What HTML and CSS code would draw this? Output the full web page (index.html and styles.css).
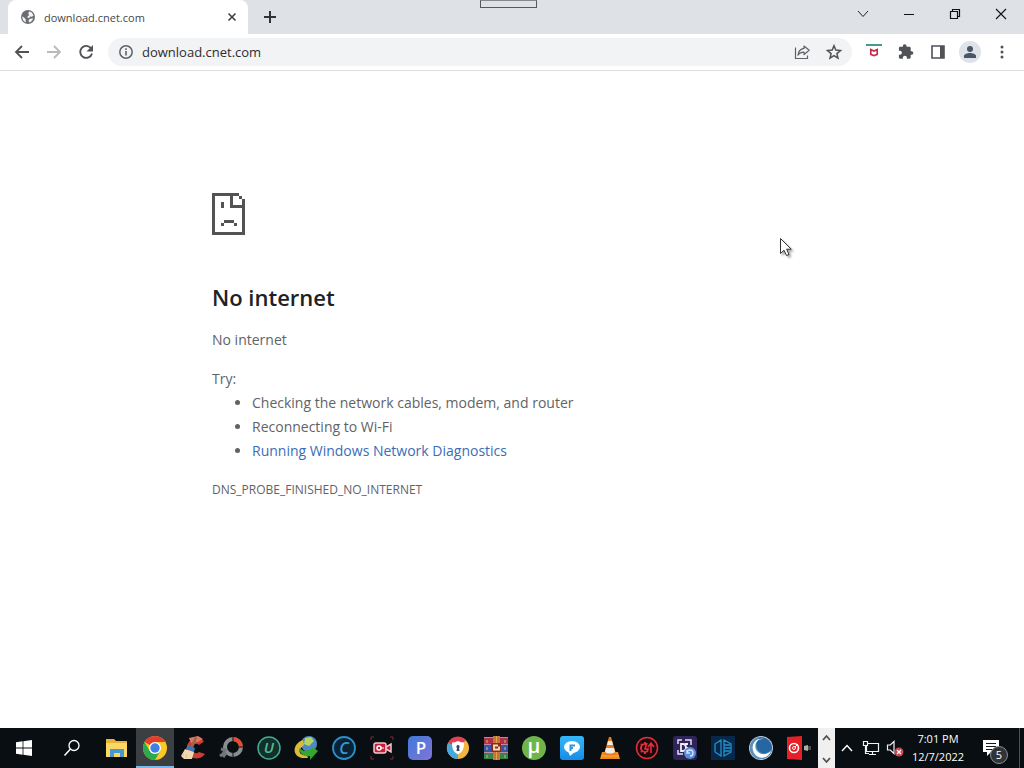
FILE: index.html
```html
<!DOCTYPE html>
<html lang="en">
<head>
    <meta charset="UTF-8">
    <meta name="viewport" content="width=device-width, initial-scale=1.0">
    <title>download.cnet.com</title>
    <link rel="stylesheet" href="styles.css">
</head>
<body>
    <header class="titlebar">
        <div class="tab">
            <svg class="favicon" width="16" height="16" viewBox="0 0 16 16"><circle cx="8" cy="8" r="7" fill="#6b6e73"/><path d="M2.400 7.200l3.200 2.900.2 3.200C3.500 12.500 1.900 10 2.400 7.200zM9 2.400l2.500.8 2 3-1.500 1.600-2-.3-.5 1.200-2 .2.300-2 1.500-.7-1-1.500z" fill="#f4f5f6"/><path d="M9.500 10l3.500-.8c-.4 2-1.600 3.500-3.500 4.200l-1-1.400z" fill="#f4f5f6"/></svg>
            <span class="tab-title">download.cnet.com</span>
            <button class="tab-close" aria-label="Close tab"><svg width="10" height="10" viewBox="0 0 10 10"><path d="M1.500 1.500l7 7M8.500 1.500l-7 7" stroke="#3c4043" stroke-width="1.600"/></svg></button>
        </div>
        <button class="new-tab" aria-label="New tab"><svg width="14" height="14" viewBox="0 0 14 14"><path d="M7 1v12M1 7h12" stroke="#303236" stroke-width="2"/></svg></button>
        <div class="window-buttons">
            <button aria-label="Search tabs"><svg width="12" height="12" viewBox="0 0 12 12"><path d="M1 3l5 5.500L11 3" fill="none" stroke="#222"/></svg></button>
            <button aria-label="Minimize"><svg width="12" height="12" viewBox="0 0 12 12"><path d="M1 6.500h10" stroke="#111"/></svg></button>
            <button aria-label="Restore"><svg width="12" height="12" viewBox="0 0 12 12"><path d="M1.500 3.500h7v7h-7zM3.500 3.500v-2h7v7h-2" fill="none" stroke="#111" stroke-width="1.200"/></svg></button>
            <button aria-label="Close"><svg width="12" height="12" viewBox="0 0 12 12"><path d="M1 1l10 10M11 1L1 11" stroke="#111" stroke-width="1.100"/></svg></button>
        </div>
        <div class="handle"></div>
    </header>

    <nav class="toolbar">
        <button class="tool" aria-label="Back"><svg width="16" height="16" viewBox="0 0 16 16"><path d="M15 8H2M8 2L2 8l6 6" fill="none" stroke="#505256" stroke-width="1.800"/></svg></button>
        <button class="tool" aria-label="Forward"><svg width="16" height="16" viewBox="0 0 16 16"><path d="M1 8h13M8 2l6 6-6 6" fill="none" stroke="#b9babc" stroke-width="1.800"/></svg></button>
        <button class="tool" aria-label="Reload"><svg width="16" height="16" viewBox="0 0 16 16"><path d="M13.200 4.500A6 6 0 1 0 14 9.500" fill="none" stroke="#505256" stroke-width="1.900"/><path d="M15 1v6.500H8.500z" fill="#505256"/></svg></button>
        <div class="address">
            <svg width="16" height="16" viewBox="0 0 16 16"><circle cx="8" cy="8" r="6.200" fill="none" stroke="#5f6368" stroke-width="1.500"/><path d="M7.200 7h1.600v4.500H7.200zM7.200 4.300h1.600v1.600H7.200z" fill="#5f6368"/></svg>
            <input class="address-input" type="text" aria-label="Address" value="download.cnet.com">
            <button class="tool" aria-label="Share"><svg width="16" height="16" viewBox="0 0 16 16"><path d="M1.500 3.500v11h12v-3" fill="none" stroke="#5f6368" stroke-width="1.200"/><path d="M10 2l5.200 4.300L10 10.500V8.200c-2.800 0-4.600.8-6 3C4.400 7.500 6.400 4.900 10 4.400z" fill="none" stroke="#5f6368" stroke-width="1.200" stroke-linejoin="round"/></svg></button>
            <button class="tool" aria-label="Bookmark"><svg width="16" height="16" viewBox="0 0 16 16"><path d="M8 1.800l1.800 4.300 4.700.4-3.600 3.100 1.100 4.600-4-2.500-4 2.500 1.100-4.600-3.600-3.100 4.700-.4z" fill="none" stroke="#505256" stroke-width="1.500"/></svg></button>
        </div>
        <button class="tool" aria-label="WebAdvisor"><svg width="16" height="16" viewBox="0 0 16 16"><path d="M0 0h16v2H0z" fill="#4a9b85"/><path d="M4.800 5.500v5L8 11.600l3.200-1.100v-5L8 7z" fill="none" stroke="#c32b46" stroke-width="1.700"/></svg></button>
        <button class="tool" aria-label="Extensions"><svg width="16" height="16" viewBox="0 0 16 16"><path d="M13.600 7.300h-.9V4.100c0-.8-.6-1.400-1.400-1.400H8.600v-.5a1.900 1.900 0 0 0-3.800 0v.5H2.300c-.8 0-1.400.6-1.400 1.400v2.600h1a2 2 0 0 1 0 4h-1v2.600c0 .8.600 1.400 1.400 1.400h2.600v-1a2 2 0 0 1 4 0v1h2.400c.8 0 1.400-.6 1.400-1.400v-2.500h.9a1.700 1.700 0 0 0 0-3.500z" fill="#505256"/></svg></button>
        <button class="tool" aria-label="Side panel"><svg width="16" height="16" viewBox="0 0 16 16"><path d="M2 2h12v12H2z" fill="none" stroke="#505256" stroke-width="1.600"/><path d="M10 2h4v12h-4z" fill="#505256"/></svg></button>
        <button class="tool" aria-label="Profile"><svg width="22" height="22" viewBox="0 0 22 22"><circle cx="11" cy="11" r="11" fill="#dfe3e8"/><circle cx="11" cy="8" r="3" fill="#48566a"/><path d="M5 17v-2c0-2 3.500-3 6-3s6 1 6 3v2z" fill="#48566a"/></svg></button>
        <button class="tool" aria-label="Menu"><svg width="16" height="16" viewBox="0 0 16 16" fill="#505256"><circle cx="8" cy="3" r="1.500"/><circle cx="8" cy="8" r="1.500"/><circle cx="8" cy="13" r="1.500"/></svg></button>
    </nav>

    <main class="page">
        <div class="error">
            <svg class="sad-page" width="33" height="42" viewBox="0 0 33 42" fill="#535353" shape-rendering="crispEdges">
                <path d="M0 0h27v3H3v36h27V15H18V3h3v9h9V6h3v36H0zM27 3h3v3h-3zM9 9h3v6H9zM12 27h10v3H12zM9 30h3v3H9zM22 30h3v3h-3z"/>
            </svg>
            <h1 class="error-title">No internet</h1>
            <p class="error-text">No internet</p>
            <p class="error-text">Try:</p>
            <ul class="tips">
                <li>Checking the network cables, modem, and router</li>
                <li>Reconnecting to Wi-Fi</li>
                <li><a href="#">Running Windows Network Diagnostics</a></li>
            </ul>
            <div class="error-code">DNS_PROBE_FINISHED_NO_INTERNET</div>
        </div>
    </main>

    <footer class="taskbar">
        <button class="task-start" aria-label="Start"><svg width="16" height="16" viewBox="0 0 16 16" fill="#fff"><path d="M0 2.200L6.600 1.300v6.300H0zM7.400 1.200L16 0v7.600H7.400zM0 8.400h6.600v6.300L0 13.800zM7.400 8.400H16V16l-8.600-1.200z"/></svg></button>
        <button class="task-start" aria-label="Search"><svg width="18" height="18" viewBox="0 0 18 18"><circle cx="11" cy="6.500" r="5" fill="none" stroke="#fff" stroke-width="1.300"/><path d="M7.500 10L1.500 16.500" stroke="#fff" stroke-width="1.500"/></svg></button>
        <div class="apps">
            <button aria-label="File Explorer"><svg width="24" height="24" viewBox="0 0 24 24"><path d="M1 3h8l2 2h11v16H1z" fill="#e8b339"/><path d="M1 7h21v14H1z" fill="#fbd768"/><path d="M5 13h14v8h-4v-4H9v4H5z" fill="#4698cd"/></svg></button>
            <button class="active" aria-label="Google Chrome"><svg width="24" height="24" viewBox="0 0 24 24"><circle cx="12" cy="12" r="12" fill="#f9c926"/><path d="M12 12L1.600 6A12 12 0 0 1 22.400 6H12z" fill="#e43c2f"/><path d="M1.600 6A12 12 0 0 0 12 24l5.200-9L12 12 6.800 15z" fill="#2da94f"/><circle cx="12" cy="12" r="6" fill="#fff"/><circle cx="12" cy="12" r="4.700" fill="#3f7fe8"/></svg></button>
            <button aria-label="CCleaner"><svg width="24" height="24" viewBox="0 0 24 24"><path d="M23 5.500A10 10 0 1 0 24 18l-6-2a4.500 4.500 0 1 1 0-7z" fill="#cf3c32"/><path d="M8 2l9-2 5 3-5 3-7 1z" fill="#e27662"/><path d="M14 1l2 1-4 10-3-1z" fill="#9b6548"/><path d="M7 9l7 3-1 4-8-3z" fill="#3978b5"/><path d="M4 13l9 3-2 7H3l-3-3z" fill="#efd8b0"/><path d="M3 18l-1 2M6 18l-1 4" stroke="#dcbf90"/></svg></button>
            <button aria-label="Driver updater"><svg width="24" height="24" viewBox="0 0 24 24" fill="none"><circle cx="14" cy="11" r="8" stroke="#8a8d8f" stroke-width="4"/><path d="M14 3a8 8 0 0 1 8 8" stroke="#ed4a2d" stroke-width="4"/><path d="M2 13l4 1-2 4-3 2M7 17l-3 4" stroke="#727577" stroke-width="3"/><path d="M14 0v5M20 11h4M14 17v5" stroke="#101315"/></svg></button>
            <button aria-label="Uninstaller"><svg width="24" height="24" viewBox="0 0 24 24"><circle cx="12" cy="12" r="11" fill="#12302b" stroke="#43aa8b" stroke-width="1.500"/><text class="glyph italic" x="12" y="17" font-size="15" fill="#55b99a">U</text></svg></button>
            <button aria-label="Download manager"><svg width="24" height="24" viewBox="0 0 24 24"><circle cx="15" cy="8" r="8" fill="#4f88c9"/><path d="M11 2l6-1 3 4-5 5-5-2z" fill="#b7d45a"/><path d="M9 4C-2 8-2 20 8 22h6l-1-3C6 20 2 15 10 9z" fill="#d9bd39"/><path d="M5 12l5 3 8-2-1-3 7 5-8 9v-4c-6 1-10-2-11-8z" fill="#36a630"/></svg></button>
            <button aria-label="System care"><svg width="24" height="24" viewBox="0 0 24 24"><circle cx="12" cy="12" r="11" fill="#0a2233" stroke="#2b8fc9" stroke-width="1.800"/><text class="glyph italic" x="12" y="18" font-size="16" fill="#339bd8">C</text></svg></button>
            <button aria-label="Screen recorder"><svg width="24" height="24" viewBox="0 0 24 24" fill="none"><path d="M1 4V1h3M20 1h3v3M1 20v3h3M20 23h3v-3" stroke="#8c2432"/><rect x="4" y="7" width="12" height="10" rx="2" fill="#c51e39" stroke="#f3c8cd" stroke-width="1.500"/><path d="M16 11l5-3v8l-5-3z" fill="#c51e39" stroke="#f3c8cd" stroke-width="1.500"/><circle cx="9" cy="12" r="2" stroke="#fff" stroke-width="1.500"/><path d="M11 12h3" stroke="#fff"/></svg></button>
            <button aria-label="PDF"><svg width="24" height="24" viewBox="0 0 24 24"><defs><linearGradient id="pdf" x2="1" y2="1"><stop stop-color="#3d7bd9"/><stop offset="1" stop-color="#8273d6"/></linearGradient></defs><rect width="24" height="24" rx="5" fill="url(#pdf)"/><text class="glyph" x="13" y="18" font-size="17" fill="#fff">P</text></svg></button>
            <button aria-label="Safe browser"><svg width="24" height="24" viewBox="0 0 24 24"><circle cx="12" cy="12" r="11" fill="#f0b63d"/><path d="M12 12L2 7A11 11 0 0 1 20 4z" fill="#e34153"/><path d="M12 12L2 7a11 11 0 0 0 10 16z" fill="#47a8dc"/><path d="M12 5c2 1 4 1.500 6 1.500 0 6-1 9-6 12-5-3-6-6-6-12 2 0 4-.5 6-1.500z" fill="#fff"/><path d="M12 9a1.700 1.700 0 0 1 1 3l.5 3h-3l.5-3a1.700 1.700 0 0 1 1-3z" fill="#36465c"/></svg></button>
            <button aria-label="WinRAR"><svg width="24" height="24" viewBox="0 0 24 24"><path d="M0 1h24v7H0z" fill="#b32e4c"/><path d="M0 8h24v8H0z" fill="#3656a5"/><path d="M0 16h24v7H0z" fill="#38834a"/><path d="M0 1.500h24M0 8.500h24M0 16.500h24" stroke="#b98ca6"/><path d="M3 4v3M3 11v3M3 19v3M21 4v3M21 11v3M21 19v3" stroke="#d8bd4c"/><path d="M9 0h7v24H9z" fill="#c47632"/><path d="M12.500 0v24" stroke="#e0a351"/><path d="M7 7h10v9H7z" fill="#8f2928"/><path d="M14 9.500h-4v4h5v-3" fill="none" stroke="#f4e6b4" stroke-width="1.800"/></svg></button>
            <button aria-label="uTorrent"><svg width="24" height="24" viewBox="0 0 24 24"><circle cx="12" cy="12" r="12" fill="#70b54b"/><text class="glyph" x="12" y="17" font-size="20" fill="#fff">µ</text></svg></button>
            <button aria-label="Messenger"><svg width="24" height="24" viewBox="0 0 24 24"><defs><linearGradient id="chat" x2="0" y2="1"><stop stop-color="#35b8fa"/><stop offset="1" stop-color="#168ce9"/></linearGradient></defs><rect width="24" height="24" rx="3" fill="url(#chat)"/><ellipse cx="12" cy="11" rx="8" ry="6" fill="#fff"/><path d="M8 15l2 5 6-5z" fill="#fff"/><path d="M10.500 15V9.500H15M11 12h2" fill="none" stroke="#3195d7" stroke-width="2"/></svg></button>
            <button aria-label="VLC"><svg width="24" height="24" viewBox="0 0 24 24"><path d="M4 16h16l2 7H2z" fill="#f18a1d"/><path d="M11 1h2l5 17c-3 3-9 3-12 0z" fill="#ef7b18"/><path d="M10 5h4l1 4H9zM8 12h8l1 4c-3 2-7 2-10 0z" fill="#f1eee9"/><path d="M3 20h18" stroke="#f9b04e"/></svg></button>
            <button aria-label="Booster"><svg width="24" height="24" viewBox="0 0 24 24" fill="none" stroke="#e02f3c"><circle cx="12" cy="12" r="10.500" fill="#1d080c" stroke-width="1.500"/><path d="M12 8.500a4 4 0 1 0 1 6" stroke-width="1.800"/><path d="M10 6v2M5 12h2M10 16v2M6 8l1 1M6 16l1-1" stroke-width="2"/><path d="M12 7l-2 6h3l-1 3M16 17V8M13 11l3-4 3 4" stroke-width="1.600"/></svg></button>
            <button aria-label="Backup"><svg width="24" height="24" viewBox="0 0 24 24"><rect width="24" height="24" rx="3" fill="#30255b"/><path d="M5 8V4h4M12 4h6v5M5 14v4h5" fill="none" stroke="#e7e0f4" stroke-width="1.500"/><path d="M8 8v7h2c4 0 4-7 0-7zM15 8h-3M15 12h-2" fill="none" stroke="#f0edf8" stroke-width="1.800"/><circle cx="17" cy="17" r="6" fill="#5a8ed8"/><path d="M14 17a3 3 0 1 1 3 3M14 14v3h3" fill="none" stroke="#d5e4ff" stroke-width="1.300"/></svg></button>
            <button aria-label="Driver booster"><svg width="24" height="24" viewBox="0 0 24 24" fill="none"><path d="M0 0h24v24H0z" fill="#08284b"/><path d="M10 4l-6 4v8l6 4zM13 4l7 4v8l-7 4zM13 9h6M13 12h7M13 15h6" stroke="#2390c8" stroke-width="1.300"/></svg></button>
            <button aria-label="Moon browser"><svg width="24" height="24" viewBox="0 0 24 24"><circle cx="12" cy="12" r="12" fill="#b9cad8"/><circle cx="12" cy="12" r="11" fill="#2767a1"/><path d="M12 1A11 11 0 1 0 23 12c-2 5-8 7-12 4S5 6 12 1z" fill="#5c91bc"/><path d="M15 3C6 2 4 12 9 16c4 4 10 2 13-1-3 8-13 9-17 2C1 10 6 1 15 3z" fill="#fff"/></svg></button>
            <button aria-label="Cleaner"><svg width="24" height="24" viewBox="0 0 24 24"><path d="M0 1l15-1v24L0 23z" fill="#e52027"/><circle cx="7" cy="12" r="4.500" fill="none" stroke="#fff" stroke-width="1.600"/><circle cx="7" cy="12" r="1.500" fill="none" stroke="#fff"/><path d="M8 11l3-3" stroke="#fff"/><path d="M17 10l4-1v6l-4-1z" fill="#aeb0a6"/><path d="M21 10h3v4h-3z" fill="#4d4d4b"/></svg></button>
        </div>
        <div class="scroller">
            <button aria-label="Scroll up"><svg width="9" height="6" viewBox="0 0 9 6"><path d="M1 5l3.500-4L8 5" fill="none" stroke="#505050" stroke-width="1.800"/></svg></button>
            <button aria-label="Scroll down"><svg width="9" height="6" viewBox="0 0 9 6"><path d="M1 1l3.500 4L8 1" fill="none" stroke="#505050" stroke-width="1.800"/></svg></button>
        </div>
        <div class="tray">
            <button aria-label="Show hidden icons"><svg width="12" height="8" viewBox="0 0 12 8"><path d="M1 7l5-5.500L11 7" fill="none" stroke="#fff" stroke-width="1.400"/></svg></button>
            <button aria-label="Network"><svg width="18" height="16" viewBox="0 0 18 16" fill="none" stroke="#f2f2f2"><path d="M5.500 3.500h11v8h-12v-6M7 14.500h7M10.500 11.500v3M1.500 1.500h4v4h-4zM3.500 5.500v8H7" stroke-width="1.200"/></svg></button>
            <button aria-label="Volume muted"><svg width="18" height="18" viewBox="0 0 18 18"><path d="M1.500 6h2.800L8 2.500v12L4.300 11H1.500z" fill="none" stroke="#f2f2f2" stroke-width="1.200"/><circle cx="13" cy="13" r="4.500" fill="#c84552"/><path d="M11 11l4 4M15 11l-4 4" stroke="#fff" stroke-width="1.300"/></svg></button>
        </div>
        <div class="clock"><time>7:01 PM</time><time>12/7/2022</time></div>
        <button class="notifications" aria-label="Notifications">
            <svg width="18" height="18" viewBox="0 0 18 18"><path d="M1 1h16v12H9l-4 4v-4H1z" fill="#fff"/><path d="M4 4.500h10M4 7.500h10M4 10.500h7" stroke="#14181b"/></svg>
            <span class="badge">5</span>
        </button>
        <div class="show-desktop"></div>
    </footer>

    <svg class="cursor" width="16" height="22" viewBox="0 0 16 22"><path d="M1.500 1.500v15l3.500-3.300 2.500 5.300 2.500-1-2.400-5.300h4.600z" fill="#fff" stroke="#333"/></svg>
</body>
</html>
```

FILE: styles.css
```css
* {
    box-sizing: border-box;
}
body {
    margin: 0;
    min-height: 100vh;
    display: flex;
    flex-direction: column;
    position: relative;
    background: #fff;
    color: #5f6368;
    font-family: "Open Sans", "Noto Sans", sans-serif;
    font-size: 14px;
}
button {
    display: flex;
    align-items: center;
    justify-content: center;
    padding: 0;
    border: 0;
    background: none;
    font: inherit;
    flex-shrink: 0;
}
svg {
    display: block;
    flex-shrink: 0;
    overflow: visible;
}

/* window title bar */
.titlebar {
    display: flex;
    height: 34px;
    position: relative;
    background: #dee1e6;
}
.tab {
    display: flex;
    align-items: center;
    width: 240px;
    margin-left: 8px;
    padding: 0 8px 0 12px;
    border-radius: 8px 8px 0 0;
    background: #fff;
    font-size: 11px;
    color: #45484c;
}
.tab-title {
    flex: 1;
    margin-left: 8px;
}
.tab-close {
    width: 16px;
    height: 16px;
}
.new-tab {
    width: 28px;
    margin-left: 8px;
}
.window-buttons {
    display: flex;
    height: 28px;
    margin-left: auto;
}
.window-buttons button {
    width: 46px;
}
.handle {
    position: absolute;
    top: 0;
    left: 50%;
    width: 57px;
    height: 8px;
    margin-left: -32px;
    border: 1px solid #55585c;
    border-top-color: #85888c;
}

/* navigation */
.toolbar {
    display: flex;
    align-items: center;
    height: 37px;
    padding: 0 6px;
    border-bottom: 1px solid #dcdee0;
}
.tool {
    width: 32px;
    height: 28px;
}
.address {
    flex: 1;
    display: flex;
    align-items: center;
    height: 28px;
    margin: 0 6px;
    padding: 0 2px 0 10px;
    border-radius: 14px;
    background: #f1f3f4;
}
.address-input {
    flex: 1;
    min-width: 0;
    padding: 0 8px;
    border: 0;
    outline: 0;
    background: none;
    font: inherit;
    font-size: 13px;
    color: #2c2e31;
}

/* error page */
.page {
    flex: 1;
    padding: 122px 24px 24px;
}
.error {
    max-width: 600px;
    margin: 0 auto;
    line-height: 24px;
}
.sad-page {
    margin-bottom: 47px;
}
.error-title {
    margin: 0 0 16px;
    font-size: 22px;
    font-weight: 600;
    line-height: 30px;
    color: #202124;
}
.error-text {
    margin: 0;
}
.error-text + .error-text {
    margin-top: 15px;
}
.tips {
    margin: 0 0 15px;
    padding-left: 40px;
}
.tips a {
    color: #3b6cb8;
    text-decoration: none;
}
.error-code {
    font-size: 12px;
}

/* taskbar */
.taskbar {
    display: flex;
    height: 40px;
    background: #080e12;
    color: #fff;
}
.task-start {
    width: 48px;
}
.apps {
    flex: 1;
    display: flex;
    min-width: 0;
    padding-left: 2px;
}
.apps button {
    flex: 1;
    min-width: 0;
}
.apps .active {
    background: #3b3f42;
    border-bottom: 2px solid #76b9ed;
    padding-top: 2px;
}
.glyph {
    font-family: "Open Sans", sans-serif;
    font-weight: 600;
    text-anchor: middle;
}
.italic {
    font-style: italic;
}
.scroller {
    display: flex;
    flex-direction: column;
    justify-content: space-between;
    width: 17px;
    padding: 7px 0 5px;
    background: #f0f0f0;
}
.tray {
    display: flex;
}
.tray button {
    width: 24px;
}
.clock {
    display: flex;
    flex-direction: column;
    justify-content: center;
    width: 62px;
    text-align: center;
    font-size: 11px;
    line-height: 18px;
}
.notifications {
    width: 44px;
    margin-right: 6px;
    position: relative;
}
.badge {
    position: absolute;
    right: 5px;
    bottom: 4px;
    width: 18px;
    height: 18px;
    border: 1px solid #8b8e90;
    border-radius: 50%;
    background: #303437;
    color: #fff;
    font-size: 11px;
    line-height: 16px;
}
.show-desktop {
    width: 5px;
    border-left: 1px solid #4c5053;
}

.cursor {
    position: absolute;
    top: 237px;
    left: 779px;
    filter: drop-shadow(2px 2px 1px rgba(0, 0, 0, 0.35));
}
```
